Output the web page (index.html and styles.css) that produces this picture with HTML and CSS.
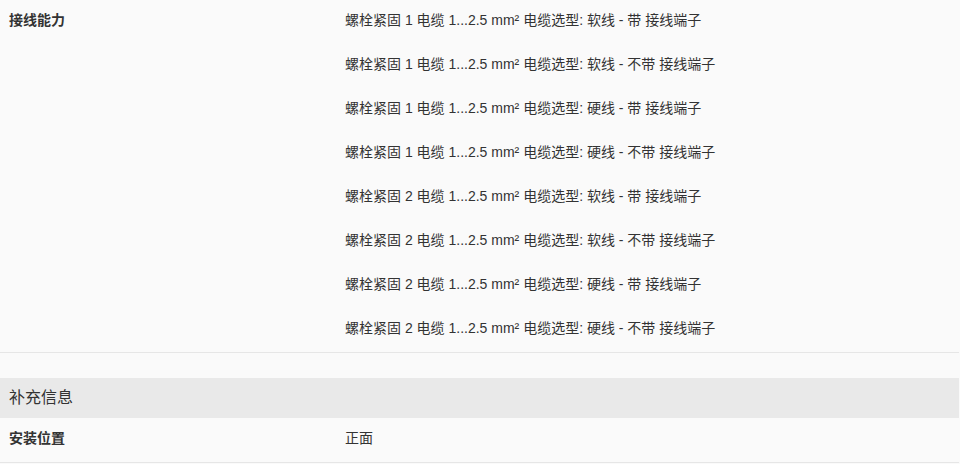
FILE: index.html
```html
<!DOCTYPE html>
<html lang="zh-CN">
<head>
    <meta charset="UTF-8">
    <meta name="viewport" content="width=device-width, initial-scale=1.0">
    <title>技术参数</title>
    <link rel="stylesheet" href="styles.css">
</head>
<body>

    <div class="specs">
        <div class="spec-row">
            <div class="spec-label">接线能力</div>
            <ul class="spec-value">
                <li>螺栓紧固 1 电缆 1...2.5 mm² 电缆选型: 软线 - 带 接线端子</li>
                <li>螺栓紧固 1 电缆 1...2.5 mm² 电缆选型: 软线 - 不带 接线端子</li>
                <li>螺栓紧固 1 电缆 1...2.5 mm² 电缆选型: 硬线 - 带 接线端子</li>
                <li>螺栓紧固 1 电缆 1...2.5 mm² 电缆选型: 硬线 - 不带 接线端子</li>
                <li>螺栓紧固 2 电缆 1...2.5 mm² 电缆选型: 软线 - 带 接线端子</li>
                <li>螺栓紧固 2 电缆 1...2.5 mm² 电缆选型: 软线 - 不带 接线端子</li>
                <li>螺栓紧固 2 电缆 1...2.5 mm² 电缆选型: 硬线 - 带 接线端子</li>
                <li>螺栓紧固 2 电缆 1...2.5 mm² 电缆选型: 硬线 - 不带 接线端子</li>
            </ul>
        </div>

        <h2 class="section-title">补充信息</h2>

        <div class="spec-row">
            <div class="spec-label">安装位置</div>
            <ul class="spec-value">
                <li>正面</li>
            </ul>
        </div>
    </div>

</body>
</html>
```

FILE: styles.css
```css
body {
    font-family: "Liberation Sans", Arial, "Noto Sans CJK SC", sans-serif;
    margin: 0;
    padding: 0;
    background-color: #fafafa;
    color: #333;
}
.specs {
    width: 959px;
}
.spec-row {
    display: flex;
    padding: 10px 0 14px 9px;
    border-bottom: 1px solid #e6e6e6;
    font-size: 14px;
    line-height: 20px;
}
.spec-label {
    width: 336px;
    font-weight: bold;
}
.spec-value {
    list-style: none;
    margin: 0;
    padding: 0;
}
.spec-value li + li {
    margin-top: 24px;
}
.section-title {
    margin: 25px 0 0;
    padding: 10px 9px;
    background-color: #e9e9e9;
    font-size: 16px;
    font-weight: normal;
    line-height: 20px;
}
```
